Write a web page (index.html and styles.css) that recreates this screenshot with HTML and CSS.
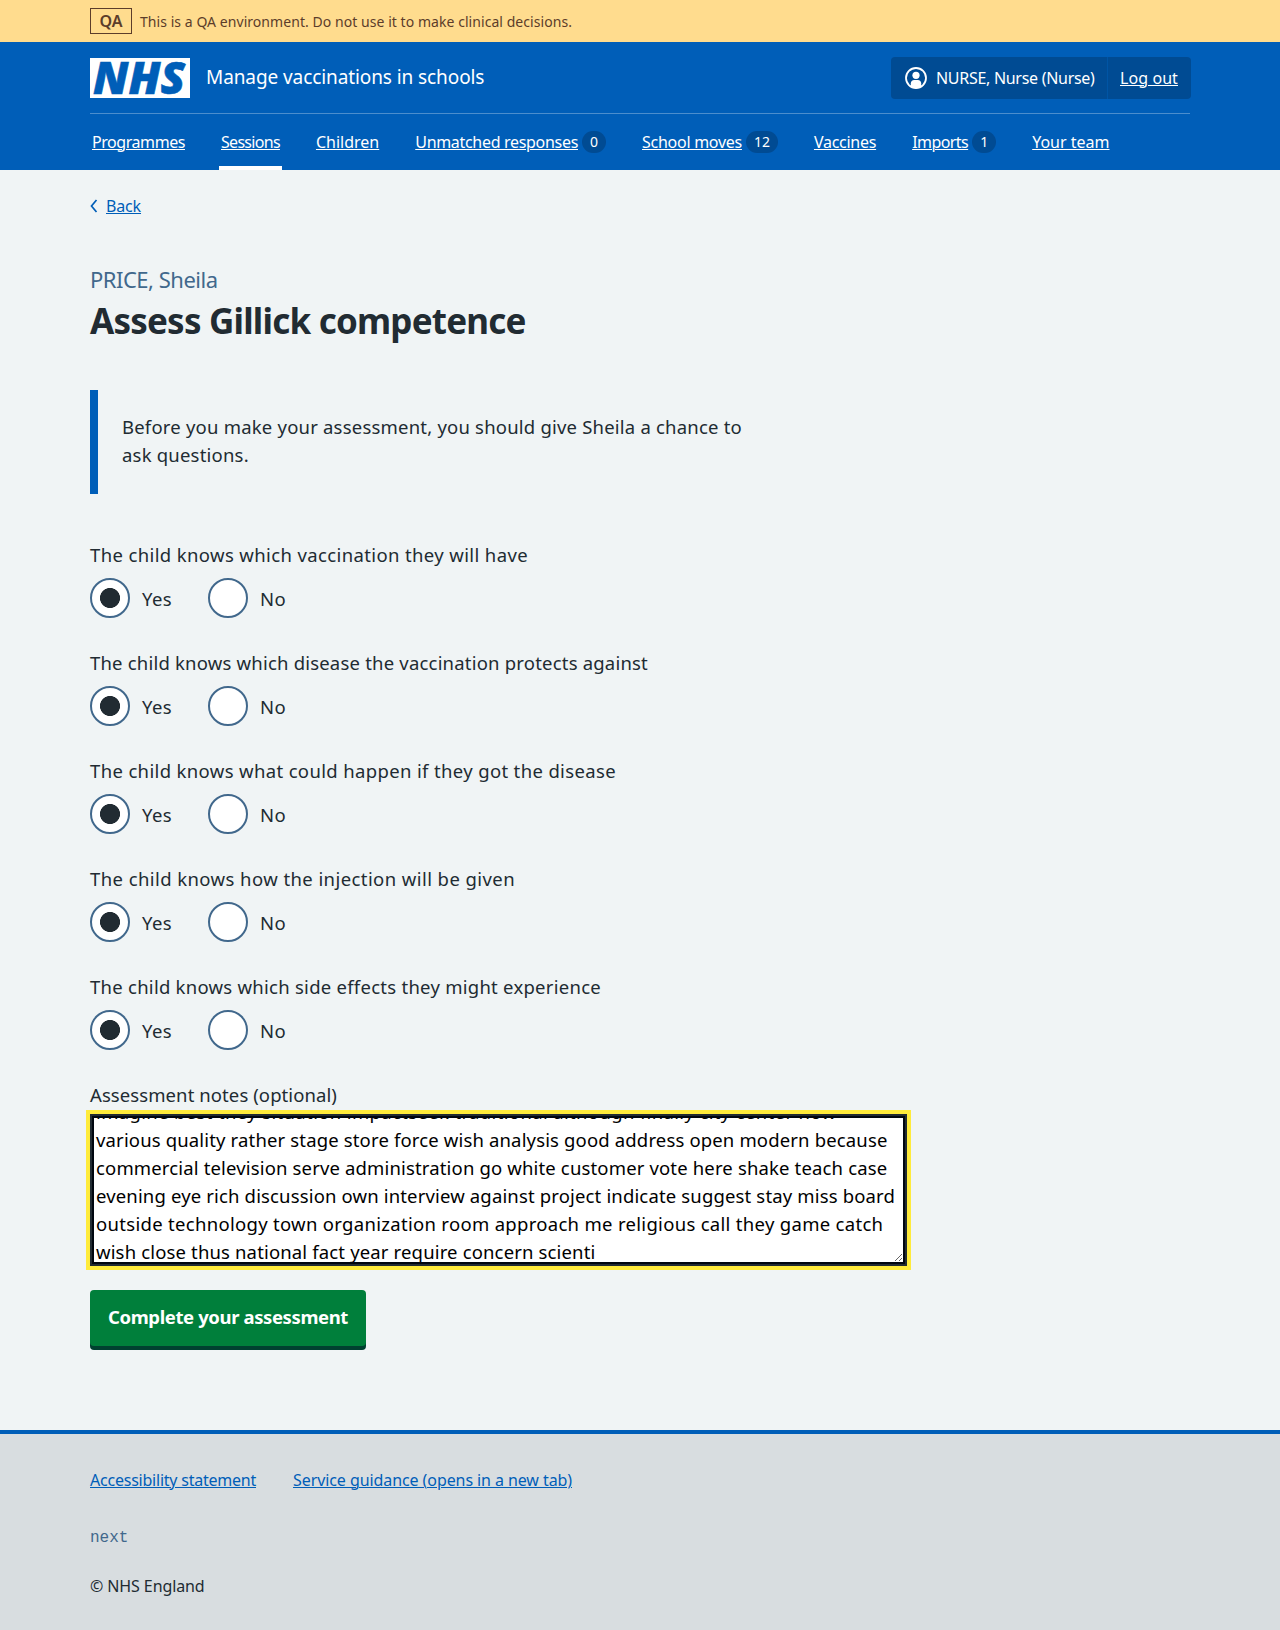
FILE: index.html
```
<!DOCTYPE html>
<html lang="en">
<head>
<meta charset="utf-8">
<title>Assess Gillick competence – Manage vaccinations in schools</title>
<link rel="stylesheet" href="styles.css">
</head>
<body>
<div class="environment">
  <div class="container environment-row">
    <strong class="environment-tag">QA</strong>
    <span>This is a QA environment. Do not use it to make clinical decisions.</span>
  </div>
</div>
<header class="header">
  <div class="container">
    <div class="header-row">
      <svg class="logo" width="100" height="40" viewBox="0 0 100 40" role="img" aria-label="NHS">
        <rect width="100" height="40" fill="#fff"/>
        <text class="logo-text" x="3" y="36" textLength="92" lengthAdjust="spacingAndGlyphs">NHS</text>
      </svg>
      <span class="service-name">Manage vaccinations in schools</span>
      <div class="account">
        <span class="account-user">
          <svg width="22" height="22" viewBox="0 0 22 22" aria-hidden="true">
            <circle cx="11" cy="11" r="10" fill="none" stroke="#fff" stroke-width="1.8"/>
            <circle cx="11" cy="8.3" r="3.6" fill="#fff"/>
            <path d="M5.8 20v-3.6c0-2 1.4-3.4 3.4-3.4h3.6c2 0 3.4 1.400 3.400 3.400V20L11 21.500z" fill="#fff"/>
          </svg>
          <span class="account-name">NURSE, Nurse (Nurse)</span>
        </span>
        <a class="account-logout" href="#">Log out</a>
      </div>
    </div>
    <nav class="nav">
      <div class="nav-item"><a class="nav-programmes" href="#">Programmes</a></div>
      <div class="nav-item nav-item-current"><a class="nav-sessions" href="#">Sessions</a></div>
      <div class="nav-item"><a href="#">Children</a></div>
      <div class="nav-item"><a class="nav-responses" href="#">Unmatched responses</a><span class="badge">0</span></div>
      <div class="nav-item"><a class="nav-moves" href="#">School moves</a><span class="badge">12</span></div>
      <div class="nav-item"><a class="nav-vaccines" href="#">Vaccines</a></div>
      <div class="nav-item"><a class="nav-imports" href="#">Imports</a><span class="badge">1</span></div>
      <div class="nav-item"><a href="#">Your team</a></div>
    </nav>
  </div>
</header>
<main class="container main">
  <div class="back">
    <svg width="8" height="14" viewBox="0 0 8 14" aria-hidden="true"><path d="M6.500 1L1.500 7l5 6" fill="none" stroke="#005eb8" stroke-width="1.700"/></svg>
    <a href="#">Back</a>
  </div>
  <div class="caption">PRICE, Sheila</div>
  <h1 class="title">Assess Gillick competence</h1>
  <div class="inset"><p>Before you make your assessment, you should give Sheila a chance to ask questions.</p></div>
  <form class="form">
    <fieldset class="question q-vaccination">
      <legend>The child knows which vaccination they will have</legend>
      <div class="radios">
        <label class="radio"><input type="radio" name="q1" checked><span>Yes</span></label>
        <label class="radio"><input type="radio" name="q1"><span>No</span></label>
      </div>
    </fieldset>
    <fieldset class="question q-disease">
      <legend>The child knows which disease the vaccination protects against</legend>
      <div class="radios">
        <label class="radio"><input type="radio" name="q2" checked><span>Yes</span></label>
        <label class="radio"><input type="radio" name="q2"><span>No</span></label>
      </div>
    </fieldset>
    <fieldset class="question q-outcome">
      <legend>The child knows what could happen if they got the disease</legend>
      <div class="radios">
        <label class="radio"><input type="radio" name="q3" checked><span>Yes</span></label>
        <label class="radio"><input type="radio" name="q3"><span>No</span></label>
      </div>
    </fieldset>
    <fieldset class="question q-injection">
      <legend>The child knows how the injection will be given</legend>
      <div class="radios">
        <label class="radio"><input type="radio" name="q4" checked><span>Yes</span></label>
        <label class="radio"><input type="radio" name="q4"><span>No</span></label>
      </div>
    </fieldset>
    <fieldset class="question q-effects">
      <legend>The child knows which side effects they might experience</legend>
      <div class="radios">
        <label class="radio"><input type="radio" name="q5" checked><span>Yes</span></label>
        <label class="radio"><input type="radio" name="q5"><span>No</span></label>
      </div>
    </fieldset>
    <div class="notes-label" id="notes-label">Assessment notes (optional)</div>
    <div class="notes" role="textbox" aria-multiline="true" aria-labelledby="notes-label" contenteditable="true" spellcheck="false">
      <div class="notes-first">imagine best they situation impactseek traditional although finally city center now</div>
      <div>various quality rather stage store force wish analysis good address open modern because</div>
      <div>commercial television serve administration go white customer vote here shake teach case</div>
      <div>evening eye rich discussion own interview against project indicate suggest stay miss board</div>
      <div class="notes-wide">outside technology town organization room approach me religious call they game catch</div>
      <div>wish close thus national fact year require concern scienti</div>
    </div>
    <button class="button" type="button">Complete your assessment</button>
  </form>
</main>
<footer class="footer">
  <div class="container">
    <div class="footer-links">
      <a class="footer-accessibility" href="#">Accessibility statement</a>
      <a class="footer-guidance" href="#">Service guidance (opens in a new tab)</a>
    </div>
    <div class="version">next</div>
    <div class="copyright">© NHS England</div>
  </div>
</footer>
</body>
</html>
```
FILE: styles.css
```
* { box-sizing: border-box; }
body {
  margin: 0;
  background: #f0f4f5;
  color: #212b32;
  font: 16px/24px "Noto Sans", "Open Sans", sans-serif;
}
a { color: #005eb8; text-decoration: underline; text-decoration-thickness: 1px; text-underline-offset: 1px; }
.container { width: 1100px; margin: 0 auto; }

.environment { background: #ffdc8e; color: #5c3d2a; }
.environment-row { display: flex; align-items: center; gap: 8px; height: 42px; padding-top: 1px; font-size: 14px; letter-spacing: 0.055px; }
.environment-tag { width: 42px; margin-top: -1px; border: 1px solid #5c3d2a; font-size: 16px; font-weight: 600; line-height: 24px; text-align: center; letter-spacing: 0; }

.header { background: #005eb8; color: #fff; }
.header a { color: #fff; }
.header-row { display: flex; align-items: center; padding: 15px 0 14px; border-bottom: 1px solid #4c8ecd; }
.logo { display: block; overflow: visible; }
.logo-text { fill: #005eb8; stroke: #005eb8; stroke-width: 0.6px; font: italic 900 45px "Noto Sans", "Open Sans", sans-serif; }
.service-name { margin: 0 auto 2px 16px; font-size: 19px; letter-spacing: -0.09px; }
.account { display: flex; width: 300px; height: 42px; margin-right: -1px; border-radius: 4px; background: #004b93; }
.account-user { display: flex; align-items: center; gap: 9px; width: 217px; padding-left: 14px; border-right: 1px solid #0055a5; }
.account-name { letter-spacing: -0.29px; white-space: nowrap; }
.account-logout { padding: 9px 12px; letter-spacing: 0.08px; }
.nav { display: flex; gap: 32px; height: 56px; }
.nav-item { display: flex; align-items: center; padding: 0 2px; white-space: nowrap; }
.nav-item-current { box-shadow: inset 0 -4px #fff; }
.nav-programmes { letter-spacing: -0.44px; }
.nav-sessions { letter-spacing: -0.69px; }
.nav-responses { letter-spacing: -0.31px; }
.nav-moves, .nav-vaccines { letter-spacing: -0.27px; }
.nav-imports { letter-spacing: -0.56px; }
.badge { min-width: 24px; margin-left: 4px; padding: 0 8px; border-radius: 12px; background: #004b93; font-size: 14px; line-height: 22px; text-align: center; }

.main { padding-top: 24px; }
.back { display: flex; align-items: center; gap: 8px; margin-bottom: 45px; letter-spacing: -0.15px; }
.caption { color: #41688c; font-size: 22px; line-height: 32px; letter-spacing: -0.5px; }
.title { margin: 4px 0 47px; font-size: 35px; line-height: 44px; font-weight: 700; letter-spacing: -0.79px; }
.inset { width: 727px; padding: 23px 24px 25px; border-left: 8px solid #005eb8; }
.inset p { width: 650px; margin: 0; font-size: 18.5px; line-height: 28px; letter-spacing: 0.206px; }

.form { margin-top: 47px; font-size: 18.5px; line-height: 28px; }
.question { min-width: 0; margin: 0 0 30px; padding: 0; border: 0; }
.question legend { padding: 0; margin-bottom: 9px; }
.question:last-of-type { margin-bottom: 31px; }
.q-vaccination legend { letter-spacing: 0.375px; }
.q-disease legend { letter-spacing: 0.2px; }
.q-outcome legend { letter-spacing: 0.354px; }
.q-injection legend { letter-spacing: 0.421px; }
.q-effects legend { letter-spacing: 0.261px; }
.question + .question { margin-top: 31px; }
.radios { display: flex; height: 40px; }
.radio { display: flex; align-items: center; gap: 12px; width: 118px; height: 40px; letter-spacing: 0.4px; }
.radio span { padding-top: 2px; }
.radio input {
  appearance: none;
  width: 40px;
  height: 40px;
  margin: 0;
  border: 2px solid #41688c;
  border-radius: 50%;
  background: #fff;
}
.radio input:checked { background: radial-gradient(circle, #212b32 9.7px, #fff 10.3px); }
.notes-label { letter-spacing: 0.086px; }
.notes {
  width: 813px;
  height: 148px;
  margin: 7px 2px 26px;
  padding: 2px;
  border: 2px solid #00060f;
  box-shadow: 0 0 0 2px #212b32, 0 0 0 6px #ffeb3b;
  background: #fff;
  color: #000;
  letter-spacing: 0.153px;
  white-space: nowrap;
  overflow: hidden;
  resize: vertical;
}
/* The text is scrolled, so only the foot of this line shows. */
.notes-first { margin-top: -22px; letter-spacing: 0.353px; }
.notes-wide { letter-spacing: 0.305px; }
.button {
  display: block;
  width: 276px;
  height: 56px;
  padding: 0 0 2px;
  border: 0;
  border-radius: 4px;
  box-shadow: 0 4px #004030;
  background: #007f3b;
  color: #fff;
  font: 700 18.5px/28px "Noto Sans", "Open Sans", sans-serif;
  letter-spacing: -0.386px;
}

.footer { height: 200px; margin-top: 84px; padding-top: 34px; border-top: 4px solid #005eb8; background: #d8dde0; }
.footer-links { display: flex; gap: 37px; }
.footer-accessibility { letter-spacing: -0.228px; }
.footer-guidance { letter-spacing: -0.083px; }
.version { margin: 34px 0 24px; color: #41688c; font-family: "Liberation Mono", monospace; }
.copyright { letter-spacing: -0.1px; }
```
